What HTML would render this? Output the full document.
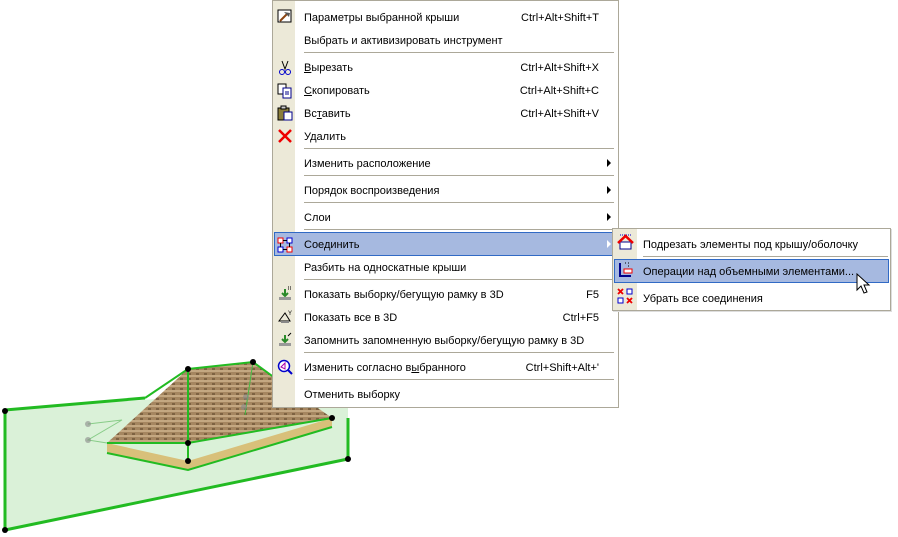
<!DOCTYPE html>
<html><head><meta charset="utf-8"><style>
body{margin:0;width:898px;height:537px;background:#fff;position:relative;overflow:hidden;font-family:"Liberation Sans","DejaVu Sans",sans-serif;font-size:11px;color:#000}
.m{position:absolute;background:#fff;border:1px solid #aca899}
.ic{position:absolute;left:0;top:0;bottom:0;background:#ece9d8}
.r{position:absolute;height:23px;line-height:23px;white-space:nowrap;margin-top:1px}
.sc{position:absolute;right:0;top:0}
.sep{position:absolute;height:1px;background:#aca899}
.hl{position:absolute;background:#a6b9e0;border:1px solid #316ac5}
.ar{position:absolute;width:0;height:0;border-left:4px solid #000;border-top:4px solid transparent;border-bottom:4px solid transparent}
.i{position:absolute}
u{text-decoration:underline}
</style></head><body>
<svg width="898" height="537" style="position:absolute;left:0;top:0">
<defs><pattern id="rf" width="8" height="5" patternUnits="userSpaceOnUse"><rect width="8" height="5" fill="#a58660"/><rect width="8" height="2" fill="#c4a882"/><rect x="4" y="3" width="3" height="2" fill="#7d6242"/></pattern></defs>
<polygon points="5,410 348,385 348,459 5,530" fill="#d6f0d4" fill-opacity="0.9"/>
<polygon points="107,443 188,461 332,418 332,427 188,470 107,453" fill="#d8c07a"/>
<polygon points="107,443 188,369 253,362 332,418 188,443" fill="url(#rf)"/>
<polyline points="107,443 188,443 332,418" fill="none" stroke="#22bb22" stroke-width="2"/>
<polyline points="107,453 188,470 332,427" fill="none" stroke="#22bb22" stroke-width="2"/>
<polyline points="145,398 188,369 253,362 275,378" fill="none" stroke="#22bb22" stroke-width="2"/>
<line x1="188" y1="369" x2="188" y2="461" stroke="#22bb22" stroke-width="2"/>
<line x1="253" y1="362" x2="245" y2="415" stroke="#44bb44" stroke-width="1"/>
<polyline points="88,424 122,420 88,440 107,443" fill="none" stroke="#88cc88" stroke-width="1"/>
<polyline points="5,410 145,398" fill="none" stroke="#22bb22" stroke-width="3"/>
<polyline points="5,410 5,530 348,459 348,418" fill="none" stroke="#22bb22" stroke-width="3"/>
<g fill="#000"><circle cx="5" cy="411" r="3"/><circle cx="5" cy="530" r="3"/><circle cx="348" cy="459" r="3"/><circle cx="188" cy="369" r="3"/><circle cx="253" cy="362" r="3"/><circle cx="188" cy="443" r="3"/><circle cx="188" cy="461" r="3"/><circle cx="332" cy="418" r="3"/></g>
<g fill="#888" fill-opacity="0.6"><circle cx="88" cy="424" r="3"/><circle cx="88" cy="440" r="3"/><circle cx="246" cy="397" r="3"/><circle cx="244" cy="407" r="3"/></g>
</svg>

<div class="m" style="left:272px;top:0;width:345px;height:406px">
<div class="ic" style="width:22px"></div>
<div class="hl" style="left:1px;top:231px;width:340px;height:22px"></div>
<div class="r" style="left:31px;right:19px;top:5px">Параметры выбранной крыши<span class="sc">Ctrl+Alt+Shift+T</span></div>
<div class="r" style="left:31px;top:28px">Выбрать и активизировать инструмент</div>
<div class="sep" style="left:31px;width:310px;top:51px"></div>
<div class="r" style="left:31px;right:19px;top:55px"><u>В</u>ырезать<span class="sc">Ctrl+Alt+Shift+X</span></div>
<div class="r" style="left:31px;right:19px;top:78px"><u>С</u>копировать<span class="sc">Ctrl+Alt+Shift+C</span></div>
<div class="r" style="left:31px;right:19px;top:101px">Вс<u>т</u>авить<span class="sc">Ctrl+Alt+Shift+V</span></div>
<div class="r" style="left:31px;top:124px">Удалить</div>
<div class="sep" style="left:31px;width:310px;top:147px"></div>
<div class="r" style="left:31px;top:151px">Изменить расположение</div>
<div class="ar" style="left:334px;top:158px"></div>
<div class="sep" style="left:31px;width:310px;top:174px"></div>
<div class="r" style="left:31px;top:178px">Порядок воспроизведения</div>
<div class="ar" style="left:334px;top:185px"></div>
<div class="sep" style="left:31px;width:310px;top:201px"></div>
<div class="r" style="left:31px;top:205px">Слои</div>
<div class="ar" style="left:334px;top:212px"></div>
<div class="sep" style="left:31px;width:310px;top:228px"></div>
<div class="r" style="left:31px;top:232px">Соединить</div>
<div class="ar" style="left:334px;top:239px;border-left-color:#fff"></div>
<div class="r" style="left:31px;top:255px">Разбить на односкатные крыши</div>
<div class="sep" style="left:31px;width:310px;top:278px"></div>
<div class="r" style="left:31px;right:19px;top:282px">Показать выборку/бегущую рамку в 3D<span class="sc">F5</span></div>
<div class="r" style="left:31px;right:19px;top:305px">Показать все в 3D<span class="sc">Ctrl+F5</span></div>
<div class="r" style="left:31px;top:328px">Запомнить запомненную выборку/бегущую рамку в 3D</div>
<div class="sep" style="left:31px;width:310px;top:351px"></div>
<div class="r" style="left:31px;right:19px;top:355px">Изменить согласно в<u>ы</u>бранного<span class="sc">Ctrl+Shift+Alt+'</span></div>
<div class="sep" style="left:31px;width:310px;top:378px"></div>
<div class="r" style="left:31px;top:382px">Отменить выборку</div>
<svg class="i" style="left:4px;top:8px" width="16" height="16"><rect x="1" y="1" width="13" height="12" fill="#fff" stroke="#000"/><line x1="3" y1="12" x2="10" y2="5" stroke="#8b4513" stroke-width="2"/><path d="M7 3 L12 8 L13 4 Z" fill="#555"/></svg>
<svg class="i" style="left:5px;top:59px" width="14" height="16"><path d="M4 1 L7 9 L10 1" fill="none" stroke="#000"/><circle cx="4" cy="12" r="2.5" fill="none" stroke="#00c"/><circle cx="10" cy="12" r="2.5" fill="none" stroke="#00c"/></svg>
<svg class="i" style="left:4px;top:82px" width="16" height="16"><rect x="1" y="1" width="8" height="10" fill="#fff" stroke="#000"/><rect x="6" y="5" width="8" height="10" fill="#fff" stroke="#00008b"/><line x1="8" y1="9" x2="12" y2="9" stroke="#00008b"/><line x1="8" y1="11" x2="12" y2="11" stroke="#00008b"/></svg>
<svg class="i" style="left:4px;top:104px" width="16" height="16"><rect x="1" y="3" width="11" height="12" fill="#8a7d3a" stroke="#000"/><rect x="4" y="1" width="5" height="3" fill="#ccc" stroke="#000"/><rect x="7" y="7" width="8" height="8" fill="#fff" stroke="#00008b"/></svg>
<svg class="i" style="left:5px;top:128px" width="14" height="14"><path d="M1 1 L13 13 M13 1 L1 13" stroke="#e00" stroke-width="2.5"/></svg>
<svg class="i" style="left:4px;top:236px" width="16" height="16"><rect x="1" y="1" width="5" height="5" fill="#fff" stroke="#e00"/><rect x="10" y="1" width="5" height="5" fill="#fff" stroke="#00c"/><rect x="1" y="10" width="5" height="5" fill="#fff" stroke="#00c"/><rect x="10" y="10" width="5" height="5" fill="#fff" stroke="#e00"/><path d="M6 3.5H10M3.5 6V10M12.5 6V10M6 12.5H10" stroke="#000"/></svg>
<svg class="i" style="left:4px;top:285px" width="16" height="16"><path d="M8 3 V9 M5 7 L8 10 L11 7" stroke="#2a8a2a" stroke-width="2" fill="none"/><rect x="2" y="11" width="12" height="3" fill="#999"/><path d="M11 1h1M13 1h1M11 3h1M13 3h1" stroke="#000"/></svg>
<svg class="i" style="left:4px;top:308px" width="16" height="16"><path d="M2 12 L8 4 L13 12 Z" fill="none" stroke="#000"/><path d="M4 13 L12 13" stroke="#888" stroke-width="2"/><text x="11" y="6" font-size="6">Y</text></svg>
<svg class="i" style="left:4px;top:331px" width="16" height="16"><path d="M8 3 V9 M5 7 L8 10 L11 7" stroke="#2a8a2a" stroke-width="2" fill="none"/><rect x="2" y="11" width="12" height="3" fill="#999"/><path d="M11 4 L14 1" stroke="#000"/></svg>
<svg class="i" style="left:4px;top:358px" width="16" height="16"><circle cx="7" cy="7" r="5.5" fill="#fff" stroke="#00c" stroke-width="1.5"/><path d="M11 11 L15 15" stroke="#00c" stroke-width="2"/><path d="M4 8 L8 4 L8 10 Z" fill="none" stroke="#a0a"/></svg>
</div>

<div class="m" style="left:612px;top:228px;width:277px;height:81px;box-shadow:1px 1px 0 #ddd">
<div class="ic" style="width:24px"></div>
<div class="hl" style="left:1px;top:30px;width:273px;height:22px"></div>
<div class="r" style="left:30px;top:4px">Подрезать элементы под крышу/оболочку</div>
<div class="sep" style="left:30px;width:245px;top:27px"></div>
<div class="r" style="left:30px;top:31px">Операции над объемными элементами...</div>
<div class="r" style="left:30px;top:58px">Убрать все соединения</div>
<svg class="i" style="left:4px;top:5px" width="17" height="17"><path d="M3 1H14" stroke="#00c" stroke-dasharray="1 1"/><rect x="3" y="8" width="11" height="7" fill="#fff" stroke="#00008b"/><path d="M1 9 L8.5 2 L16 9" fill="none" stroke="#e00" stroke-width="2.5"/></svg>
<svg class="i" style="left:4px;top:32px" width="17" height="17"><path d="M3 2 V15 H14" fill="none" stroke="#00008b" stroke-width="2"/><rect x="7" y="8" width="8" height="4" fill="#fff" stroke="#e00"/><path d="M8 2h1M11 2h1M11 5h1" stroke="#000"/></svg>
<svg class="i" style="left:4px;top:59px" width="17" height="17"><path d="M1 1L6 6M6 1L1 6M10 10L15 15M15 10L10 15" stroke="#e00" stroke-width="1.8"/><rect x="10" y="1" width="5" height="5" fill="#fff" stroke="#00c"/><rect x="1" y="10" width="5" height="5" fill="#fff" stroke="#00c"/></svg>
</div>
<svg class="i" style="left:856px;top:273px" width="16" height="24"><path d="M1 1 L1 17 L5 13 L8 20 L11 19 L8 12 L13 12 Z" fill="#fff" stroke="#000"/></svg>
</body></html>
